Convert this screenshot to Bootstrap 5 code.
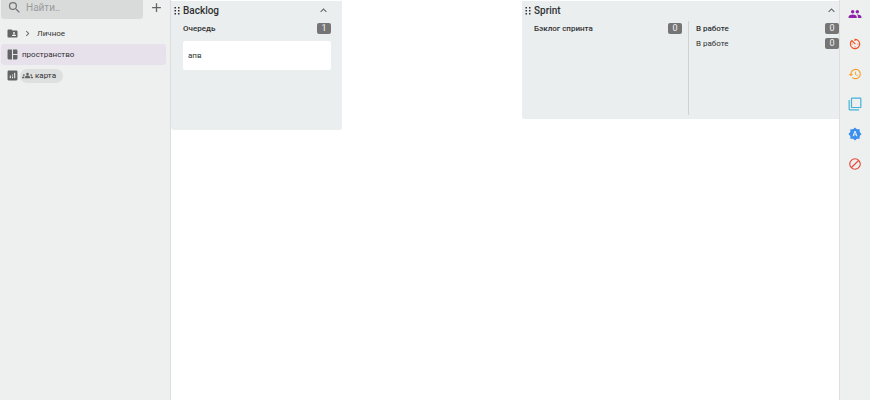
<!DOCTYPE html>
<html lang="ru">
<head>
<meta charset="utf-8">
<meta name="viewport" content="width=device-width, initial-scale=1">
<title>пространство</title>
<link href="https://cdn.jsdelivr.net/npm/bootstrap@5.3.0/dist/css/bootstrap.min.css" rel="stylesheet">
<style>
body { font-family: Roboto, "Liberation Sans", sans-serif; font-size: 8px; line-height: 15px; color: #303132; background: #fff; }
svg { display: block; fill: currentColor; flex: none; }
a { color: inherit; text-decoration: none; }
h2, h3 { margin: 0; font-weight: 500; }
.side { width: 171px; background: #eef0f0; border-right: 1px solid #dcdfe0; padding: 0 4px 0 1px; }
.search-box { background: #d9dbdb; height: 19px; border-radius: 0 0 3px 3px; padding: 0 8px 4px 6px; color: #707272; }
.search-box input { font-size: 10px; line-height: 15px; color: #303132; }
.search-box input::placeholder { color: #999b9b; opacity: 1; }
.add-btn { width: 23px; height: 15px; color: #626464; }
.plain { border: 0; background: none; padding: 0; color: #626464; }
.tree { margin-top: 4px; color: #626464; }
.tree-row { height: 21px; padding: 0 6px; border-radius: 3px; }
.tree-row span { color: #303132; }
.tree-row.current { background: #e7e1ec; }
.pill { background: #dedfdf; border-radius: 7px; height: 14px; margin-left: 2px; padding: 0 7px 0 2px; gap: 2px; }
.pill svg { color: #626464; }
.board { padding-top: 1px; gap: 180px; }
.lane { background: #eaeeef; border-radius: 0 0 3px 3px; padding: 2px 11px 4px 12px; }
.lane-backlog { width: 171px; height: 129px; }
.lane-sprint { width: 328px; height: 118px; }
.lane-head { margin-left: -9px; margin-right: 1px; gap: 3px; height: 15px; }
.lane h2 { font-size: 10px; line-height: 15px; }
.lane h3 { font-size: 8px; line-height: 15px; }
.stage-first { width: 148px; }
.stages { margin-top: 3px; }
.stage-next { border-left: 1px solid #cfd2d3; margin-left: 6px; padding-left: 7px; }
.stage-row { height: 15px; }
.count { background: #757575; color: #f2f2f2; border-radius: 2px; width: 14px; height: 11px; font-size: 9px; line-height: 11px; text-align: center; }
.task { background: #fff; border-radius: 2px; margin-top: 5px; padding: 7px 5px; }
.rail { width: 31px; background: #eef0f0; border-left: 1px solid #dcdfe0; padding-top: 7px; gap: 16px; }
.tone-purple { color: #8e24aa; }
.tone-orange { color: #f4511e; }
.tone-amber { color: #f9a02b; }
.tone-cyan { color: #41b1d6; }
.tone-blue { color: #3a8eee; }
.tone-red { color: #e5493a; }
</style>
</head>
<body>
<div class="d-flex vh-100 overflow-hidden">
  <nav class="side flex-shrink-0" aria-label="Пространства">
    <div class="d-flex">
      <label class="search-box d-flex align-items-center flex-fill gap-1">
        <svg width="15" height="15" viewBox="0 0 24 24"><path d="M15.500 14h-.79l-.28-.27A6.470 6.470 0 0 0 16 9.500 6.500 6.500 0 1 0 9.500 16c1.610 0 3.090-.59 4.230-1.570l.27.28v.79l5 4.990L20.490 19l-4.990-5zm-6 0a4.500 4.500 0 1 1 0-9 4.500 4.500 0 0 1 0 9z"/></svg>
        <input class="plain w-100" type="text" placeholder="Найти.." aria-label="Найти">
      </label>
      <button class="plain add-btn d-flex align-items-center justify-content-center flex-shrink-0 ps-1" type="button" aria-label="Добавить"><svg width="15" height="15" viewBox="0 0 24 24"><path d="M19 13h-6v6h-2v-6H5v-2h6V5h2v6h6z"/></svg></button>
    </div>
    <div class="tree">
      <a href="#" class="tree-row d-flex align-items-center">
        <svg width="11" height="11" viewBox="1 1 22 22"><path d="M20 6h-8l-2-2H4c-1.100 0-2 .9-2 2v12c0 1.100.9 2 2 2h16c1.100 0 2-.9 2-2V8c0-1.100-.9-2-2-2zm-5 3a2 2 0 1 1 0 4 2 2 0 0 1 0-4zm4 8h-8v-1c0-1.330 2.670-2 4-2s4 .67 4 2v1z"/></svg>
        <svg class="mx-1" width="11" height="11" viewBox="0 0 24 24"><path d="M10 6 8.590 7.410 13.170 12l-4.580 4.590L10 18l6-6z"/></svg>
        <span>Личное</span>
      </a>
      <a href="#" class="tree-row current d-flex align-items-center" aria-current="page">
        <svg class="me-1" width="11" height="11" viewBox="2 2 20 20"><path d="M11 3v18H5a2 2 0 0 1-2-2V5c0-1.100.9-2 2-2h6zm2 18h6a2 2 0 0 0 2-2v-6h-8v8zm8-10V5a2 2 0 0 0-2-2h-6v8h8z"/></svg>
        <span>пространство</span>
      </a>
      <a href="#" class="tree-row d-flex align-items-center">
        <svg width="11" height="11" viewBox="2 2 20 20"><path d="M19 3H5a2 2 0 0 0-2 2v14c0 1.100.9 2 2 2h14a2 2 0 0 0 2-2V5a2 2 0 0 0-2-2zM9 17H7v-5h2v5zm4 0h-2v-3h2v3zm0-5h-2v-2h2v2zm4 5h-2V7h2v10z"/></svg>
        <span class="pill d-flex align-items-center">
          <svg width="11" height="11" viewBox="0 0 24 24"><path d="M12 12.750c1.630 0 3.070.39 4.240.9A2.990 2.990 0 0 1 18 16.390V18H6v-1.610c0-1.180.68-2.260 1.760-2.730 1.170-.52 2.610-.91 4.240-.91zM4 13a2 2 0 1 0 0-4 2 2 0 0 0 0 4zm1.130 1.100A6.950 6.950 0 0 0 1.220 14.580 2.010 2.010 0 0 0 0 16.430V18h4.500v-1.610c0-.83.23-1.610.63-2.290zM20 13a2 2 0 1 0 0-4 2 2 0 0 0 0 4zm4 3.430c0-.81-.48-1.530-1.220-1.850a6.950 6.950 0 0 0-3.910-.48c.4.68.63 1.460.63 2.290V18H24v-1.570zM12 6a3 3 0 1 1 0 6 3 3 0 0 1 0-6z"/></svg>
          карта
        </span>
      </a>
    </div>
  </nav>

  <main class="board d-flex align-items-start flex-fill overflow-hidden">
    <section class="lane lane-backlog flex-shrink-0">
      <div class="lane-head d-flex align-items-center">
        <svg width="6" height="8" viewBox="0 0 6 8"><path d="M.5 0H2v1.500H.5zM4 0h1.500v1.500H4zM.5 3H2v1.500H.5zM4 3h1.500v1.500H4zM.5 6H2v1.500H.5zM4 6h1.500v1.500H4z"/></svg>
        <h2 class="flex-fill">Backlog</h2>
        <button class="plain" type="button" aria-label="Свернуть Backlog"><svg width="13" height="13" viewBox="0 0 24 24"><path d="m12 8-6 6 1.410 1.410L12 10.830l4.590 4.580L18 14z"/></svg></button>
      </div>
      <div class="stages">
        <div class="stage-row d-flex align-items-center justify-content-between"><h3>Очередь</h3><span class="count">1</span></div>
        <div class="task">апв</div>
      </div>
    </section>
    <section class="lane lane-sprint flex-shrink-0 d-flex flex-column">
      <div class="lane-head d-flex align-items-center">
        <svg width="6" height="8" viewBox="0 0 6 8"><path d="M.5 0H2v1.500H.5zM4 0h1.500v1.500H4zM.5 3H2v1.500H.5zM4 3h1.500v1.500H4zM.5 6H2v1.500H.5zM4 6h1.500v1.500H4z"/></svg>
        <h2 class="flex-fill">Sprint</h2>
        <button class="plain" type="button" aria-label="Свернуть Sprint"><svg width="13" height="13" viewBox="0 0 24 24"><path d="m12 8-6 6 1.410 1.410L12 10.830l4.590 4.580L18 14z"/></svg></button>
      </div>
      <div class="stages d-flex flex-fill">
        <div class="stage-first">
          <div class="stage-row d-flex align-items-center justify-content-between"><h3>Бэклог спринта</h3><span class="count">0</span></div>
        </div>
        <div class="stage-next flex-fill">
          <div class="stage-row d-flex align-items-center justify-content-between"><h3>В работе</h3><span class="count">0</span></div>
          <div class="stage-row d-flex align-items-center justify-content-between"><span>В работе</span><span class="count">0</span></div>
        </div>
      </div>
    </section>
  </main>

  <aside class="rail d-flex flex-column align-items-center flex-shrink-0">
    <button class="plain tone-purple" type="button" aria-label="Участники"><svg width="14" height="14" viewBox="0 0 24 24"><path d="M16 11a3 3 0 1 0 0-6 3 3 0 0 0 0 6zm-8 0a3 3 0 1 0 0-6 3 3 0 0 0 0 6zm0 2c-2.330 0-7 1.170-7 3.500V19h14v-2.500c0-2.330-4.670-3.500-7-3.500zm8 0c-.29 0-.62.02-.97.05 1.160.84 1.970 1.970 1.970 3.450V19h6v-2.500c0-2.330-4.670-3.500-7-3.500z"/></svg></button>
    <button class="plain tone-orange" type="button" aria-label="Таймер"><svg width="14" height="14" viewBox="0 0 24 24"><path d="M11 17a1 1 0 1 0 2 0 1 1 0 0 0-2 0zm0-14v4h2V5.080A7 7 0 1 1 6.580 7.580L12 13l1.410-1.410-6.800-6.800A9 9 0 1 0 12 3h-1zm7 9a1 1 0 1 0-2 0 1 1 0 0 0 2 0zM6 12a1 1 0 1 0 2 0 1 1 0 0 0-2 0z"/></svg></button>
    <button class="plain tone-amber" type="button" aria-label="История"><svg width="14" height="14" viewBox="0 0 24 24"><path d="M13 3a9 9 0 0 0-9 9H1l3.890 3.890.07.14L9 12H6a7 7 0 1 1 2.060 4.940l-1.420 1.420A9 9 0 1 0 13 3zm-1 5v5l4.280 2.540.72-1.210-3.500-2.080V8z"/></svg></button>
    <button class="plain tone-cyan" type="button" aria-label="Копии"><svg width="14" height="14" viewBox="0 0 24 24"><path d="M3 5H1v16c0 1.100.9 2 2 2h16v-2H3V5zm18-4H7a2 2 0 0 0-2 2v14c0 1.100.9 2 2 2h14a2 2 0 0 0 2-2V3a2 2 0 0 0-2-2zm0 16H7V3h14v14z"/></svg></button>
    <button class="plain tone-blue" type="button" aria-label="Автоматизация"><svg width="14" height="14" viewBox="0 0 24 24"><path d="M10.850 12.650h2.300L12 9l-1.150 3.650zM20 8.690V4h-4.690L12 .69 8.690 4H4v4.690L.69 12 4 15.310V20h4.690L12 23.310 15.310 20H20v-4.690L23.310 12 20 8.690zM14.300 16l-.7-2h-3.200l-.7 2H7.800L11 7h2l3.200 9h-1.900z"/></svg></button>
    <button class="plain tone-red" type="button" aria-label="Блокировка"><svg width="14" height="14" viewBox="0 0 24 24"><path d="M12 2a10 10 0 1 0 0 20 10 10 0 0 0 0-20zM4 12a8 8 0 0 1 12.900-6.310L5.690 16.900A7.900 7.900 0 0 1 4 12zm8 8a7.900 7.900 0 0 1-4.900-1.690L18.310 7.100A8 8 0 0 1 12 20z"/></svg></button>
  </aside>
</div>
<script src="https://cdn.jsdelivr.net/npm/bootstrap@5.3.0/dist/js/bootstrap.bundle.min.js"></script>
</body>
</html>
